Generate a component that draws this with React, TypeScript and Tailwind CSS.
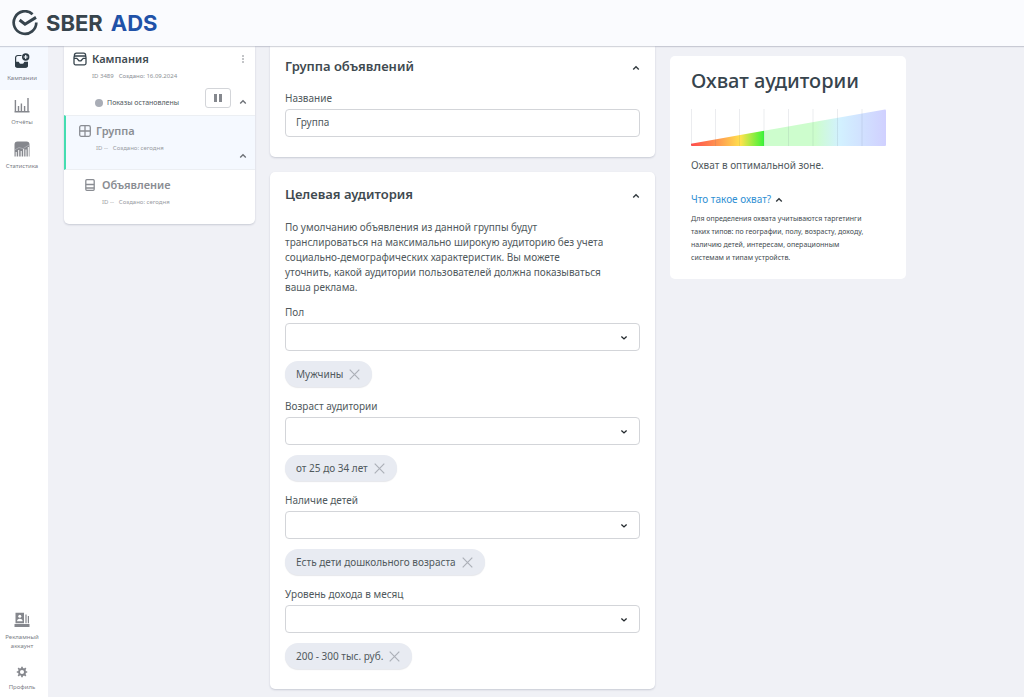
import { ReactNode, useState } from 'react';
import clsx from 'clsx';

interface IField {
  id: string;
  label: string;
  value: string;
}

const fields: IField[] = [
  { id: 'gender', label: 'Пол', value: 'Мужчины' },
  { id: 'age', label: 'Возраст аудитории', value: 'от 25 до 34 лет' },
  { id: 'children', label: 'Наличие детей', value: 'Есть дети дошкольного возраста' },
  { id: 'income', label: 'Уровень дохода в месяц', value: '200 - 300 тыс. руб.' }
];

function Chevron({ down, className }: { down?: boolean; className?: string }) {
  return (
    <svg
      viewBox="0 0 8 6"
      className={clsx('h-[6px] w-2 shrink-0', className)}
      fill="none"
      stroke="currentColor"
      strokeWidth="1.4"
      aria-hidden="true"
    >
      <path d={down ? 'M1.4 1.6 4 3.9 6.6 1.6' : 'M1.2 4.5 4 1.8 6.8 4.5'} />
    </svg>
  );
}

function LogoMark() {
  return (
    <svg viewBox="0 0 26 26" className="size-[26px]" fill="none" stroke="#37444d" aria-hidden="true">
      <path d="M20.6 4.2A11.300 11.300 0 1 0 24.300 12.4" strokeWidth="2.7" />
      <path d="M7.6 10 13 14.200 24 7.400" strokeWidth="3" />
    </svg>
  );
}

function CampaignsIcon() {
  return (
    <svg viewBox="0 0 16 16" className="size-4" fill="none" aria-hidden="true">
      <path
        d="M7.500 2.500H3.800A2.200 2.200 0 0 0 1.600 4.700v7.300a2.200 2.200 0 0 0 2.200 2.200h7.400a2.200 2.200 0 0 0 2.200-2.200V9"
        stroke="#2f3c46"
        strokeWidth="1.2"
      />
      <path
        d="M1 8.800h3.400c.5 0 .7.4.9.9.2.6.7 1 1.300 1h1.900c.6 0 1.100-.4 1.300-1 .2-.5.4-.9.9-.9H14v3.600a2.400 2.400 0 0 1-2.400 2.400H3.400A2.400 2.400 0 0 1 1 12.400z"
        fill="#2f3c46"
      />
      <circle cx="11.700" cy="4" r="3.700" fill="#2f3c46" />
      <path d="M11.700 2v4M9.700 4h4" stroke="#f5f9ff" strokeWidth="1.200" />
    </svg>
  );
}

function ReportsIcon() {
  return (
    <svg viewBox="0 0 16 16" className="size-4" fill="none" stroke="#85878d" strokeWidth="1.4" aria-hidden="true">
      <path d="M1.400 3v12M4.500 9v5M7.400 6.500V14M10.600 9v5M14 1v13M.5 14.700h15" />
    </svg>
  );
}

function StatsIcon() {
  return (
    <svg viewBox="0 0 16 16" className="size-4" aria-hidden="true">
      <path d="M3.500.5h9a3 3 0 0 1 3 3V15.500H.5V3.500a3 3 0 0 1 3-3z" fill="#85878d" />
      <path
        d="M2.200 11V16M4.700 9V16M7.200 10V16M9.700 8V16M12 8.500V16M14.300 6V16"
        stroke="#fff"
        strokeWidth="1"
      />
      <path d="M.5 9 5 6.500l4 1.200 6.500-4" stroke="#c3c5c9" strokeWidth=".6" fill="none" />
    </svg>
  );
}

function AccountIcon() {
  return (
    <svg viewBox="0 0 16 16" className="size-4" aria-hidden="true">
      <path
        d="M1.500.8h8.500v10.400H1.500zM11.400 2.500h1.200v8.700h-1.200zM13.800 4h1.200v7.200h-1.200zM.5 12h15v3H.5z"
        fill="#85878d"
      />
      <circle cx="5.800" cy="4.300" r="1.500" fill="#fff" />
      <path d="M3 9.300c0-1.600 1-2.500 2.800-2.500s2.800.9 2.800 2.500z" fill="#fff" />
    </svg>
  );
}

function GearIcon() {
  return (
    <svg viewBox="0 0 12 12" className="size-3" fill="none" stroke="#85878d" aria-hidden="true">
      <circle cx="6" cy="6" r="3" strokeWidth="1.900" />
      <path
        d="M6 .8v2M6 9.200v2M.8 6h2M9.200 6h2M2.200 2.200l1.400 1.400M8.400 8.400l1.400 1.400M2.200 9.800l1.400-1.400M8.400 3.600l1.400-1.400"
        strokeWidth="1.700"
      />
    </svg>
  );
}

function InboxIcon() {
  return (
    <svg
      viewBox="0 0 14 14"
      className="size-[14px] shrink-0"
      fill="none"
      stroke="#37444d"
      strokeWidth="1.3"
      aria-hidden="true"
    >
      <path d="M1.400 4.800V3.200A2 2 0 0 1 3.400 1.200h7.200a2 2 0 0 1 2 2v1.600" />
      <rect x="1" y="4" width="12" height="8.800" rx="1.500" />
      <path d="M1 6.400h2.800L6 8.800h2l2.200-2.400H13" />
    </svg>
  );
}

function GroupIcon() {
  return (
    <svg
      viewBox="0 0 12 12"
      className="size-3 shrink-0"
      fill="none"
      stroke="#8a8d93"
      strokeWidth="1.300"
      aria-hidden="true"
    >
      <rect x=".7" y=".7" width="10.600" height="10.600" rx="1.500" />
      <path d="M6 .7v10.600M.7 6h10.600" />
    </svg>
  );
}

function AdIcon() {
  return (
    <svg
      viewBox="0 0 10 12"
      className="h-3 w-[10px] shrink-0"
      fill="none"
      stroke="#8a8d93"
      strokeWidth="1.300"
      aria-hidden="true"
    >
      <rect x=".8" y=".7" width="8.400" height="10.600" rx="1" />
      <path d="M.8 5.500h8.400M.8 9h8.400" />
    </svg>
  );
}

function NavItem({ icon, label, active }: { icon: ReactNode; label: string; active?: boolean }) {
  return (
    <a
      href="#"
      className={clsx(
        'flex flex-col items-center gap-[5px] pt-[7px] pr-1 text-center text-[6px] leading-[9px] text-[#7d8087]',
        active && 'bg-[#f5f9ff]'
      )}
    >
      {icon}
      <span className="px-1">{label}</span>
    </a>
  );
}

function Panel({ title, className, children }: { title: string; className?: string; children: ReactNode }) {
  const [open, setOpen] = useState(true);

  return (
    <section className={clsx('bg-white px-[15px] pb-5 shadow-[0_1px_2px_rgba(40,50,80,0.2)]', className)}>
      <div className="flex items-center justify-between">
        <h2 className="text-[13px] leading-5 font-semibold text-[#3f4a50]">{title}</h2>
        <button
          type="button"
          aria-label={title}
          aria-expanded={open}
          onClick={() => setOpen(!open)}
          className="flex pt-1"
        >
          <Chevron className="text-[#333b40]" />
        </button>
      </div>
      {open && children}
    </section>
  );
}

function SelectField({ field }: { field: IField }) {
  const [value, setValue] = useState(field.value);

  return (
    <div>
      <label htmlFor={field.id} className="block leading-[15px]">
        {field.label}
      </label>
      <div className="relative mt-[3px]">
        <select
          id={field.id}
          value=""
          onChange={(e) => setValue(e.target.value)}
          className="block h-7 w-full appearance-none rounded-[4px] border border-[#d3d5d9] bg-white px-[10px]"
        >
          <option value=""></option>
          <option value={field.value}>{field.value}</option>
        </select>
        <Chevron down className="pointer-events-none absolute top-3 right-3 text-[#22282c]" />
      </div>
      {value && (
        <div className="mt-[10px] flex h-[26px] w-fit items-center gap-[6px] rounded-full bg-[#e8ebf2] pr-3 pl-[11px] shadow-[0_1px_1px_rgba(40,50,80,0.12)]">
          {value}
          <button type="button" aria-label={`Удалить: ${value}`} onClick={() => setValue('')}>
            <svg viewBox="0 0 11 11" className="size-[11px]" stroke="#acb0b8" strokeWidth="1.200">
              <path d="m.7.7 9.600 9.600M10.300.7.7 10.300" />
            </svg>
          </button>
        </div>
      )}
    </div>
  );
}

function ReachChart() {
  return (
    <svg viewBox="0 0 195 37" className="mt-[14px] block w-full" role="img" aria-label="Охват в оптимальной зоне">
      <defs>
        <linearGradient id="reached" gradientUnits="userSpaceOnUse" x1="0" y1="0" x2="73" y2="0">
          <stop offset="0" stopColor="#ff4b4b" />
          <stop offset=".38" stopColor="#ff9950" />
          <stop offset=".68" stopColor="#ffe24d" />
          <stop offset="1" stopColor="#38f538" />
        </linearGradient>
        <linearGradient id="rest" gradientUnits="userSpaceOnUse" x1="73" y1="0" x2="195" y2="0">
          <stop offset="0" stopColor="#cdfdcd" />
          <stop offset=".42" stopColor="#cdfdcd" />
          <stop offset=".62" stopColor="#d2f1ff" />
          <stop offset="1" stopColor="#d0d0ff" />
        </linearGradient>
      </defs>
      <path d="M0 34.800 73 21.800V37H1Q0 37 0 36z" fill="url(#reached)" />
      <path d="M73 21.800 194 .5q1 0 1 1V36q0 1-1 1H73z" fill="url(#rest)" />
      <path
        d="M.5 0v37M24.500 0v37M48.500 0v37M73 0v37M97.500 0v37M122 0v37M146.500 0v37M171 0v37"
        stroke="#5a6478"
        strokeOpacity=".12"
      />
    </svg>
  );
}

export default function App() {
  const [name, setName] = useState('Группа');
  const [helpOpen, setHelpOpen] = useState(true);

  return (
    <div className="flex min-h-screen flex-col bg-[#f0f1f6] font-['Noto_Sans',sans-serif] text-[10px] text-[#50595d]">
      <header className="z-10 flex h-[46px] items-center bg-[#fafbfe] px-3 shadow-[0_1px_1px_rgba(40,50,80,0.2)]">
        <a
          href="#"
          className="flex items-center gap-2 font-['Inter',sans-serif] text-[22px] leading-none font-bold text-[#37444d]"
        >
          <LogoMark />
          <span className="flex gap-2">
            <span>SBER</span>
            <span className="text-[#1f52a8]">ADS</span>
          </span>
        </a>
      </header>

      <div className="flex grow">
        <nav className="flex w-12 shrink-0 flex-col justify-between bg-white">
          <div className="grid auto-rows-[44px]">
            <NavItem active icon={<CampaignsIcon />} label="Кампании" />
            <NavItem icon={<ReportsIcon />} label="Отчёты" />
            <NavItem icon={<StatsIcon />} label="Статистика" />
          </div>
          <div className="flex flex-col gap-2 pb-[5px]">
            <NavItem icon={<AccountIcon />} label="Рекламный аккаунт" />
            <NavItem icon={<GearIcon />} label="Профиль" />
          </div>
        </nav>

        <main className="grid grow grid-cols-[191px_minmax(0,385px)_236px] items-start gap-[15px] px-4 pb-2">
          <aside className="overflow-hidden rounded-b-[5px] bg-white shadow-[0_1px_2px_rgba(40,50,80,0.2)]">
            <div className="h-[69px] pt-[5px] pr-2 pl-[9px]">
              <div className="flex items-center gap-[5px]">
                <InboxIcon />
                <h3 className="grow text-[11px] leading-4 font-semibold text-[#3f4a50]">Кампания</h3>
                <button type="button" aria-label="Меню">
                  <svg viewBox="0 0 8 8" className="size-2" fill="#777b82">
                    <circle cx="4" cy="1" r=".8" />
                    <circle cx="4" cy="4" r=".8" />
                    <circle cx="4" cy="7" r=".8" />
                  </svg>
                </button>
              </div>
              <p className="mt-1 flex gap-[5px] pl-[19px] text-[6px] leading-[10px] text-[#8c9096]">
                <span>ID 3489</span>
                <span>Создано: 16.09.2024</span>
              </p>
              <div className="mt-[7px] flex items-center pl-[22px]">
                <span className="mt-[10px] size-2 rounded-full bg-[#a9adb6]" />
                <span className="mt-[10px] ml-1 grow text-[7px] leading-[10px]">Показы остановлены</span>
                <button
                  type="button"
                  aria-label="Пауза"
                  className="mr-2 flex h-5 w-[26px] items-center justify-center gap-[2px] rounded-[3px] border border-[#d3d5d9]"
                >
                  <span className="h-2 w-[3px] bg-[#85888e]" />
                  <span className="h-2 w-[3px] bg-[#85888e]" />
                </button>
                <button type="button" aria-label="Свернуть кампанию" className="mt-2">
                  <Chevron className="text-[#6d7177]" />
                </button>
              </div>
            </div>

            <div className="flex h-[55px] items-end border-y border-l-2 border-y-[#eceff3] border-l-[#44ddb0] bg-[#f5f9ff] pt-[7px] pr-2 pl-[13px]">
              <div className="grow self-start">
                <div className="flex items-center gap-[5px]">
                  <GroupIcon />
                  <h3 className="text-[11px] leading-4 font-semibold text-[#8a8d93]">Группа</h3>
                </div>
                <p className="mt-1 flex gap-[5px] pl-[17px] text-[6px] leading-[10px] text-[#9a9da3]">
                  <span>ID --</span>
                  <span>Создано: сегодня</span>
                </p>
              </div>
              <button type="button" aria-label="Свернуть группу" className="mb-[10px] flex">
                <Chevron className="text-[#6d7177]" />
              </button>
            </div>

            <div className="h-[54px] pt-[7px] pl-[21px]">
              <div className="flex items-center gap-[7px]">
                <AdIcon />
                <h3 className="text-[11px] leading-4 font-semibold text-[#8a8d93]">Объявление</h3>
              </div>
              <p className="mt-1 flex gap-[5px] pl-[17px] text-[6px] leading-[10px] text-[#9a9da3]">
                <span>ID --</span>
                <span>Создано: сегодня</span>
              </p>
            </div>
          </aside>

          <div className="flex flex-col gap-[15px]">
            <Panel title="Группа объявлений" className="rounded-b-[5px] pt-[10px]">
              <label htmlFor="group-name" className="mt-[15px] block leading-[15px]">
                Название
              </label>
              <input
                id="group-name"
                value={name}
                onChange={(e) => setName(e.target.value)}
                className="mt-[3px] block h-7 w-full rounded-[4px] border border-[#d3d5d9] bg-white px-[10px] pb-[2px]"
              />
            </Panel>

            <Panel title="Целевая аудитория" className="rounded-[5px] pt-3">
              <p className="mt-4 leading-[15px]">
                По умолчанию объявления из данной группы будут
                <br />
                транслироваться на максимально широкую аудиторию без учета
                <br />
                социально-демографических характеристик. Вы можете
                <br />
                уточнить, какой аудитории пользователей должна показываться
                <br />
                ваша реклама.
              </p>
              <div className="mt-[10px] flex flex-col gap-3">
                {fields.map((field) => (
                  <SelectField key={field.id} field={field} />
                ))}
              </div>
            </Panel>
          </div>

          <aside className="mt-[10px] rounded-[5px] bg-white pt-[11px] pr-5 pb-[15px] pl-[21px]">
            <h2 className="text-[20px] leading-7 font-medium text-[#37444d]">Охват аудитории</h2>
            <ReachChart />
            <p className="mt-3 leading-[15px]">Охват в оптимальной зоне.</p>
            <button
              type="button"
              aria-expanded={helpOpen}
              onClick={() => setHelpOpen(!helpOpen)}
              className="mt-[19px] flex items-center gap-1 leading-[15px] text-[#2f8fd3]"
            >
              Что такое охват?
              <Chevron className="text-[#333b40]" />
            </button>
            {helpOpen && (
              <p className="mt-[5px] text-[7px] leading-[13px] text-[#444c50]">
                Для определения охвата учитываются таргетинги
                <br />
                таких типов: по географии, полу, возрасту, доходу,
                <br />
                наличию детей, интересам, операционным
                <br />
                системам и типам устройств.
              </p>
            )}
          </aside>
        </main>
      </div>
    </div>
  );
}
